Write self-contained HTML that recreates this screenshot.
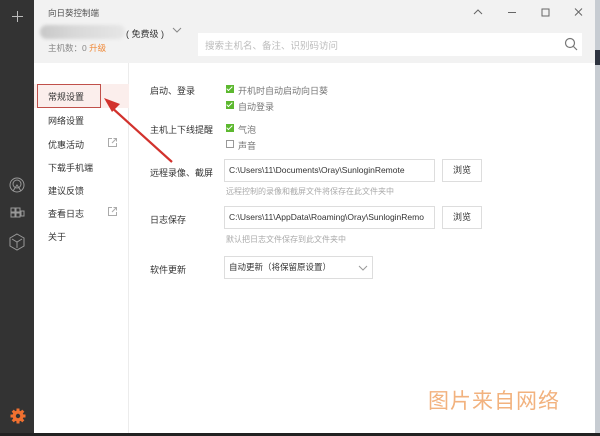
<!DOCTYPE html>
<html><head><meta charset="utf-8"><style>
*{margin:0;padding:0;box-sizing:border-box}
body{width:600px;height:436px;overflow:hidden;background:#fff;position:relative;font-family:"Liberation Sans","Noto Sans CJK SC",sans-serif;font-size:9px;color:#333}
.abs{position:absolute}
.side{left:0;top:0;width:34px;height:433px;background:#333}
.hdr{left:34px;top:0;width:561px;height:63px;background:#f2f2f2}
.nav{left:34px;top:63px;width:95px;height:370px;background:#fff;border-right:1px solid #ececec}
.t{position:absolute;white-space:nowrap}
.cb{position:absolute;width:8px;height:8px;background:#5cb82f}
.cb::after{content:"";position:absolute;left:2px;top:0px;width:2px;height:5px;border:solid #fff;border-width:0 1.3px 1.3px 0;transform:rotate(45deg)}
.cbe{position:absolute;width:8px;height:8px;border:1px solid #999;background:#fff}
.inp{position:absolute;height:23px;border:1px solid #ddd;background:#fff;padding-left:4px;line-height:21px;font-size:8.5px;color:#333;white-space:nowrap;overflow:hidden}
.btn{position:absolute;width:40px;height:23px;border:1px solid #ddd;text-align:center;line-height:21px;font-size:9px}
.hint{color:#aaa;font-size:8px}
</style></head><body>
<div class="abs side"></div>
<div class="abs" style="left:12px;top:16px;width:11px;height:1px;background:#bbb"></div>
<div class="abs" style="left:17px;top:11px;width:1px;height:11px;background:#bbb"></div>
<svg class="abs" style="left:8px;top:176px" width="18" height="80" viewBox="0 0 18 80" fill="none" stroke="#999" stroke-width="1">
<circle cx="9" cy="9" r="7"/><circle cx="9" cy="8" r="4"/><path d="M5 15 L9 9 L13 15"/>
<rect x="3" y="32" width="4" height="4"/><rect x="8" y="32" width="4" height="4"/><rect x="3" y="37" width="4" height="4"/><rect x="8" y="37" width="4" height="4"/><rect x="13" y="35" width="3" height="5"/>
<path d="M9 58 L16 62 L16 70 L9 74 L2 70 L2 62 Z"/><path d="M4 63 L9 66 L14 63 M9 66 L9 72"/>
</svg>
<svg class="abs" style="left:10px;top:408px" width="16" height="16" viewBox="0 0 16 16"><g fill="#f07030"><circle cx="8" cy="8" r="5.5"/><rect x="6.5" y="0.5" width="3" height="15"/><rect x="0.5" y="6.5" width="15" height="3"/><rect x="6.5" y="0.5" width="3" height="15" transform="rotate(45 8 8)"/><rect x="6.5" y="0.5" width="3" height="15" transform="rotate(-45 8 8)"/></g><circle cx="8" cy="8" r="2.2" fill="#333"/></svg>
<div class="abs hdr"></div>
<div class="t" style="left:48px;top:7px;font-size:8.5px;color:#555">向日葵控制端</div>
<div class="abs" style="left:40px;top:25px;width:85px;height:14px;border-radius:7px;background:linear-gradient(90deg,#c8c8c8,#d8d8d8 40%,#e6e6e6);filter:blur(1.5px)"></div>
<div class="t" style="left:126px;top:27px;font-size:9px;color:#333">( 免费级 )</div>
<svg class="abs" style="left:172px;top:27px" width="10" height="6" fill="none" stroke="#888"><path d="M1 1 L5 5 L9 1"/></svg>
<div class="t" style="left:48px;top:42px;font-size:8.5px;color:#888">主机数：0 <span style="color:#f08a3a">升级</span></div>
<div class="abs" style="left:198px;top:33px;width:384px;height:23px;background:#fff"></div>
<div class="t" style="left:205px;top:38px;font-size:9.5px;color:#bbb">搜索主机名、备注、识别码访问</div>
<svg class="abs" style="left:564px;top:37px" width="14" height="14" fill="none" stroke="#777" stroke-width="1.2"><circle cx="6" cy="6" r="4.5"/><path d="M9.5 9.5 L13 13"/></svg>
<svg class="abs" style="left:470px;top:7px" width="120" height="10" fill="none" stroke="#666" stroke-width="1"><path d="M4 7 L8 3 L12 7"/><path d="M38 5.5 H46"/><rect x="72" y="2" width="7" height="7"/><path d="M105 1.5 L112 8.5 M112 1.5 L105 8.5"/></svg>
<div class="abs" style="left:595px;top:0;width:5px;height:436px;background:#c7ccd2"></div>
<div class="abs" style="left:595px;top:50px;width:5px;height:15px;background:#2e3440"></div>
<div class="abs" style="left:0;top:433px;width:600px;height:3px;background:#222"></div>
<div class="abs nav"></div>
<div class="abs" style="left:34px;top:84px;width:95px;height:24px;background:#fbeeec"></div>
<div class="abs" style="left:37px;top:84px;width:64px;height:24px;border:1px solid #c0504a"></div>
<div class="t" style="left:48px;top:90px;font-size:9px">常规设置</div>
<div class="t" style="left:48px;top:114px">网络设置</div>
<div class="t" style="left:48px;top:138px">优惠活动</div>
<svg class="abs" style="left:107px;top:137px" width="11" height="11" fill="none" stroke="#aaa"><path d="M5 1.5 H1.5 V9.5 H9.5 V6"/><path d="M5 6 L9.5 1.5 M6.5 1.5 H9.5 V4.5"/></svg>
<div class="t" style="left:48px;top:161px">下载手机端</div>
<div class="t" style="left:48px;top:184px">建议反馈</div>
<div class="t" style="left:48px;top:207px">查看日志</div>
<svg class="abs" style="left:107px;top:206px" width="11" height="11" fill="none" stroke="#aaa"><path d="M5 1.5 H1.5 V9.5 H9.5 V6"/><path d="M5 6 L9.5 1.5 M6.5 1.5 H9.5 V4.5"/></svg>
<div class="t" style="left:48px;top:230px">关于</div>
<svg class="abs" style="left:100px;top:90px" width="80" height="80"><path d="M72 72 L10 16" stroke="#d2322d" stroke-width="2.2"/><path d="M4 8 L20 14 L12 22 Z" fill="#d2322d"/></svg>
<div class="t" style="left:150px;top:84px">启动、登录</div>
<div class="cb" style="left:226px;top:85px"></div><div class="t" style="left:238px;top:84px;color:#777">开机时自动启动向日葵</div>
<div class="cb" style="left:226px;top:101px"></div><div class="t" style="left:238px;top:100px;color:#777">自动登录</div>
<div class="t" style="left:150px;top:123px">主机上下线提醒</div>
<div class="cb" style="left:226px;top:124px"></div><div class="t" style="left:238px;top:123px;color:#777">气泡</div>
<div class="cbe" style="left:226px;top:140px"></div><div class="t" style="left:238px;top:139px;color:#777">声音</div>
<div class="t" style="left:150px;top:166px">远程录像、截屏</div>
<div class="inp" style="left:224px;top:159px;width:211px">C:\Users\11\Documents\Oray\SunloginRemote</div>
<div class="btn" style="left:442px;top:159px">浏览</div>
<div class="t hint" style="left:226px;top:186px">远程控制的录像和截屏文件将保存在此文件夹中</div>
<div class="t" style="left:150px;top:213px">日志保存</div>
<div class="inp" style="left:224px;top:206px;width:211px">C:\Users\11\AppData\Roaming\Oray\SunloginRemo</div>
<div class="btn" style="left:442px;top:206px">浏览</div>
<div class="t hint" style="left:226px;top:234px">默认把日志文件保存到此文件夹中</div>
<div class="t" style="left:150px;top:263px">软件更新</div>
<div class="inp" style="left:224px;top:256px;width:149px">自动更新（将保留原设置）</div>
<svg class="abs" style="left:358px;top:265px" width="10" height="6" fill="none" stroke="#999"><path d="M1 1 L5 5 L9 1"/></svg>
<div class="t" style="left:428px;top:385px;font-size:21px;color:#f2b27e;letter-spacing:1px">图片来自网络</div>
</body></html>
